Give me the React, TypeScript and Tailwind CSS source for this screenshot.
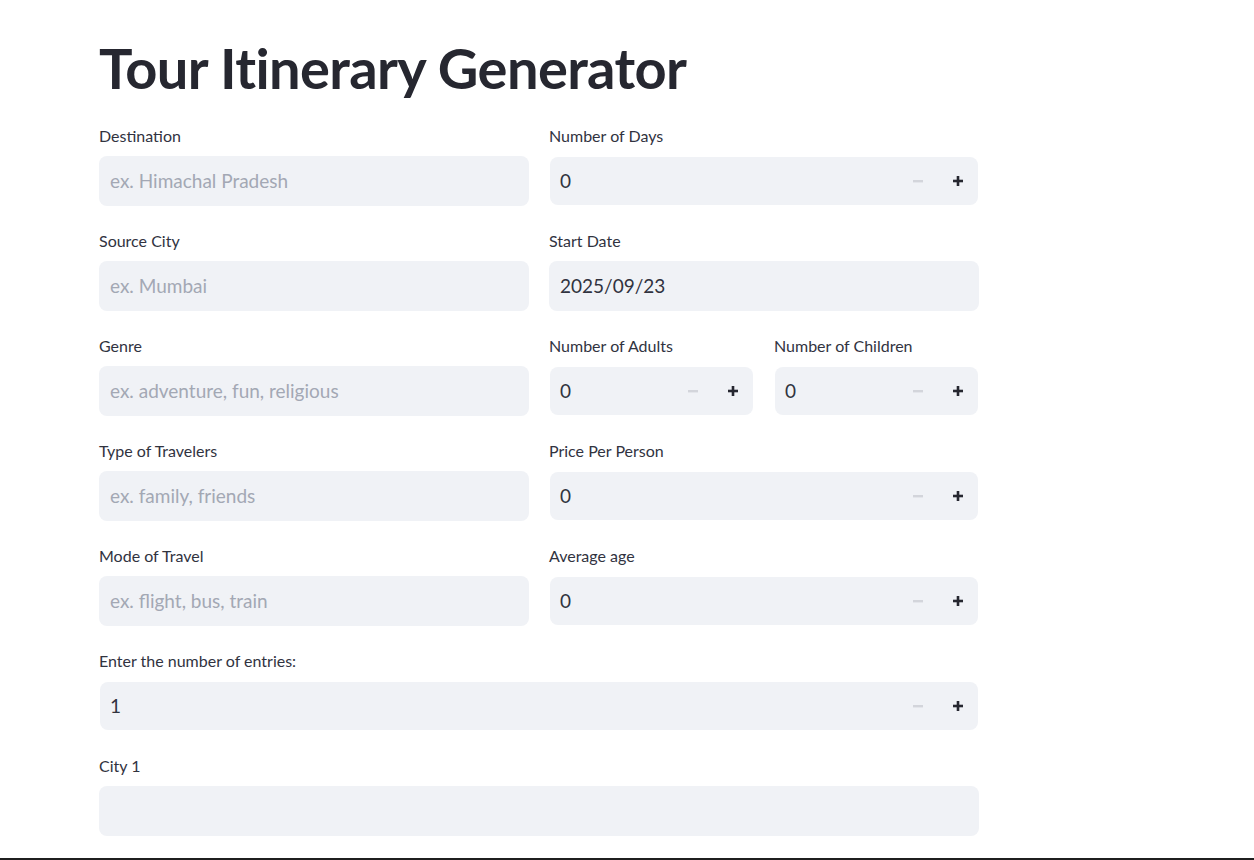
import React from 'react';

const font = { fontFamily: 'Lato, "Noto Sans", sans-serif' };

function Label({ text }: { text: string }) {
  return <div className="h-5 mb-2.5 text-[16px] leading-5 text-[#31333f]">{text}</div>;
}

function TextField({ label, placeholder, value }: { label: string; placeholder?: string; value?: string }) {
  return (
    <div className="flex flex-col">
      <Label text={label} />
      <div className="h-[50px] rounded-lg bg-[#f0f2f6] flex items-center px-[11px] text-[19px]">
        {value ? (
          <span className="text-[#31333f]">{value}</span>
        ) : (
          <span className="text-[#a3a8b4]">{placeholder}</span>
        )}
      </div>
    </div>
  );
}

function NumberField({ label, value }: { label: string; value: string }) {
  return (
    <div className="flex flex-col">
      <Label text={label} />
      <div className="h-[50px] py-px px-px">
        <div className="h-12 rounded-lg bg-[#f0f2f6] flex items-center pl-[10px] text-[19px] text-[#31333f]">
          <span className="flex-1">{value}</span>
          <span className="w-10 h-12 flex items-center justify-center">
            <svg width="12" height="12" viewBox="0 0 12 12">
              <rect x="1" y="5" width="10" height="2.4" fill="#d3d5db" />
            </svg>
          </span>
          <span className="w-10 h-12 flex items-center justify-center">
            <svg width="12" height="12" viewBox="0 0 12 12">
              <rect x="1" y="4.7" width="10" height="2.6" fill="#262730" />
              <rect x="4.7" y="1" width="2.6" height="10" fill="#262730" />
            </svg>
          </span>
        </div>
      </div>
    </div>
  );
}

export default function App() {
  return (
    <div className="h-[860px] bg-white border-b-2 border-[#1f1f1f] overflow-hidden" style={font}>
      <div className="w-[880px] ml-[99px] pt-[31px]">
        <h1 className="text-[56px] leading-[74px] font-bold text-[#262730] tracking-[-0.6px] mb-[21px]">
          Tour Itinerary Generator
        </h1>
        <div className="grid grid-cols-2 gap-x-5 gap-y-[25px]">
          <TextField label="Destination" placeholder="ex. Himachal Pradesh" />
          <NumberField label="Number of Days" value="0" />
          <TextField label="Source City" placeholder="ex. Mumbai" />
          <TextField label="Start Date" value="2025/09/23" />
          <TextField label="Genre" placeholder="ex. adventure, fun, religious" />
          <div className="grid grid-cols-2 gap-x-5">
            <NumberField label="Number of Adults" value="0" />
            <NumberField label="Number of Children" value="0" />
          </div>
          <TextField label="Type of Travelers" placeholder="ex. family, friends" />
          <NumberField label="Price Per Person" value="0" />
          <TextField label="Mode of Travel" placeholder="ex. flight, bus, train" />
          <NumberField label="Average age" value="0" />
          <div className="col-span-2">
            <NumberField label="Enter the number of entries:" value="1" />
          </div>
          <div className="col-span-2">
            <TextField label="City 1" value="" />
          </div>
        </div>
      </div>
    </div>
  );
}
